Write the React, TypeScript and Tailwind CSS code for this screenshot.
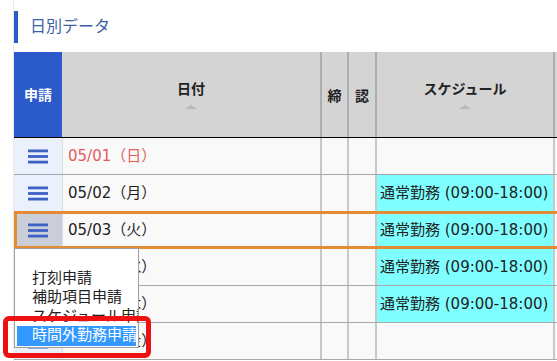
import React from 'react';

const font = { fontFamily: '"DejaVu Sans", "Noto Sans CJK JP", sans-serif' };

const rows = [
  { date: '05/01（日）', red: true, sched: '' },
  { date: '05/02（月）', sched: '通常勤務 (09:00-18:00)' },
  { date: '05/03（火）', sched: '通常勤務 (09:00-18:00)', selected: true },
  { date: '05/04（水）', sched: '通常勤務 (09:00-18:00)' },
  { date: '05/05（木）', sched: '通常勤務 (09:00-18:00)' },
  { date: '05/06（金）', sched: '' },
];

const MenuIcon = () => (
  <svg width="22" height="17" viewBox="0 0 22 17">
    <rect x="1" y="1.5" width="20" height="2.8" fill="#3d62c4" />
    <rect x="1" y="7.1" width="20" height="2.8" fill="#3d62c4" />
    <rect x="1" y="12.7" width="20" height="2.8" fill="#3d62c4" />
  </svg>
);

const SortMark = () => (
  <span className="mt-[9px] block w-0 h-0 border-l-[6px] border-r-[6px] border-b-[4px] border-l-transparent border-r-transparent border-b-[#b8b8b8]" />
);

export default function App() {
  return (
    <div className="relative w-[557px] h-[361px] overflow-hidden bg-white text-[#222]" style={font}>
      <div className="absolute left-[13px] top-0 bottom-0 w-px bg-[#f0eaea]" />
      <div className="pl-[14px]">
        {/* title */}
        <div className="mt-[11px] h-[32px] flex items-center border-l-[4px] border-[#2a5bc8] pl-[12px] text-[16px] text-[#3b5fa6]">
          日別データ
        </div>

        {/* table */}
        <div className="mt-[9px] w-[620px]">
          <div className="flex h-[86px] border-b border-black text-[14px] font-bold">
            <div className="w-[48px] bg-[#2b5bcb] text-white flex items-center justify-center pt-[2px]">申請</div>
            <div className="w-[258px] bg-[#d4d4d4] flex flex-col items-center justify-center pt-[2px]">
              <span className="leading-none">日付</span>
              <SortMark />
            </div>
            <div className="w-[27px] bg-[#d4d4d4] border-l-2 border-[#adadad] flex items-center justify-center pt-[4px]">締</div>
            <div className="w-[28px] bg-[#d4d4d4] border-l-2 border-[#adadad] flex items-center justify-center pt-[4px]">認</div>
            <div className="w-[178px] bg-[#d4d4d4] border-l-2 border-[#adadad] flex flex-col items-center justify-center pt-[2px]">
              <span className="leading-none">スケジュール</span>
              <SortMark />
            </div>
            <div className="w-[81px] bg-[#d4d4d4] border-l-2 border-[#adadad]" />
          </div>

          {rows.map((r, i) => (
            <div key={i} className="relative flex h-[37px] border-b border-[#a8a8a8] bg-[#f9f9f9] text-[15px]">
              <div className={`w-[48px] flex items-center justify-center ${r.selected ? 'bg-[#c9ced8]' : 'bg-[#eaf1fc]'}`}>
                <MenuIcon />
              </div>
              <div className={`w-[258px] border-l border-[#dcdcdc] flex items-center pl-[5px] ${r.red ? 'text-[#e35d5d]' : ''}`}>
                {r.date}
              </div>
              <div className="w-[27px] border-l-2 border-[#c8c8c8]" />
              <div className="w-[28px] border-l-2 border-[#c8c8c8]" />
              <div className="w-[178px] border-l-2 border-[#c8c8c8]">
                {r.sched && (
                  <div className="h-full bg-[#7fffff] flex items-center pl-[3px] whitespace-nowrap">{r.sched}</div>
                )}
              </div>
              <div className="w-[81px] border-l-2 border-[#c8c8c8]" />
              {r.selected && (
                <div className="absolute left-0 right-0 top-[-1px] bottom-[-1px] border-[3px] border-[#e38b35] pointer-events-none" />
              )}
            </div>
          ))}
        </div>
      </div>

      {/* request dropdown */}
      <div className="absolute left-[14px] top-[248px] w-[125px] h-[100px] bg-white border border-[#a0a0a0] text-[15px] leading-[19px] overflow-hidden whitespace-nowrap">
        <div className="h-[20px]" />
        <div className="pl-[17px]">打刻申請</div>
        <div className="pl-[17px]">補助項目申請</div>
        <div className="pl-[17px]">スケジュール申請</div>
        <div className="mx-[2px] pl-[15px] h-[20px] bg-[#3399ff] text-white">時間外勤務申請</div>
      </div>
      <div className="absolute left-[3px] top-[316px] w-[148px] h-[42px] border-[5px] border-[#ee1111] rounded-[6px]" />
    </div>
  );
}
